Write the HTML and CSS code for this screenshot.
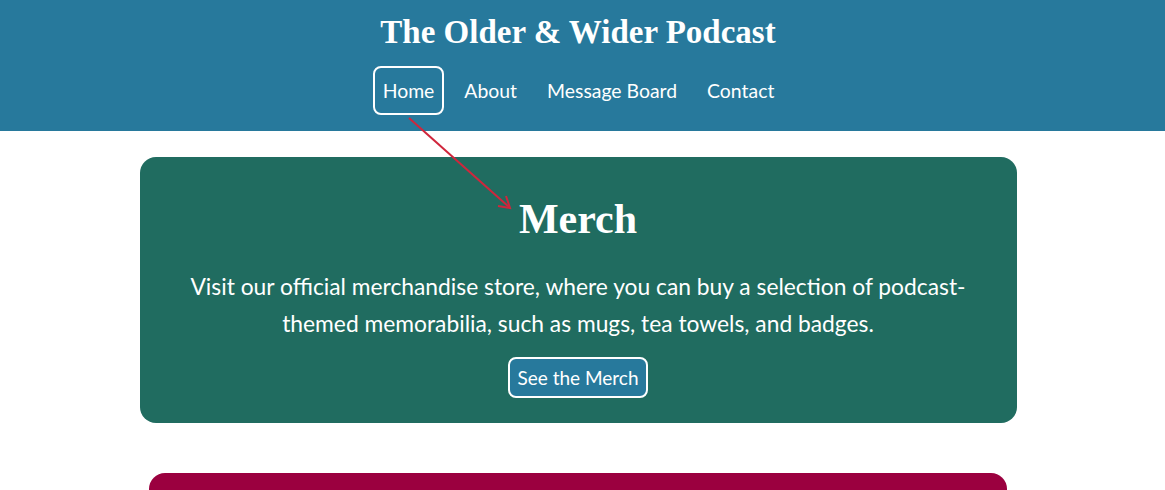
FILE: index.html
```html
<!DOCTYPE html>
<html lang="en">
<head>
<meta charset="utf-8">
<title>The Older &amp; Wider Podcast</title>
<link rel="stylesheet" href="styles.css">
</head>
<body>
<header class="site-header">
  <h1 class="site-title">The Older &amp; Wider Podcast</h1>
  <nav class="nav">
    <a class="nav-link active" href="#">Home</a>
    <a class="nav-link" href="#">About</a>
    <a class="nav-link" href="#">Message Board</a>
    <a class="nav-link" href="#">Contact</a>
  </nav>
</header>
<main class="content">
  <section class="card card-merch">
    <h2 class="card-title">Merch</h2>
    <p class="card-text">Visit our official merchandise store, where you can buy a selection of podcast-themed memorabilia, such as mugs, tea towels, and badges.</p>
    <a class="btn" href="#">See the Merch</a>
  </section>
  <section class="card card-next"></section>
</main>
<svg class="annot" width="1165" height="490" viewBox="0 0 1165 490">
  <line x1="409" y1="118" x2="509" y2="207" stroke="#d0263c" stroke-width="2" />
  <polyline points="498,206 510,208 506,196" fill="none" stroke="#d0263c" stroke-width="2" />
</svg>
</body>
</html>
```
FILE: styles.css
```css
html, body {
  margin: 0;
  padding: 0;
  background: #ffffff;
}
body {
  font-family: "Lato", "Open Sans", sans-serif;
  color: #ffffff;
  position: relative;
  overflow: hidden;
  height: 490px;
}
.site-header {
  background: #27799c;
  height: 131px;
  display: flex;
  flex-direction: column;
  align-items: center;
  box-sizing: border-box;
  padding-top: 10px;
  padding-right: 9px;
}
.site-title {
  margin: 0;
  font-family: "Liberation Serif", "DejaVu Serif", serif;
  font-weight: bold;
  font-size: 33px;
  line-height: 44px;
}
.nav {
  display: flex;
  gap: 10px;
  margin-top: 12px;
  margin-left: 1px;
}
.nav-link {
  color: #ffffff;
  text-decoration: none;
  font-size: 19.4px;
  line-height: 45px;
  padding: 0 8px;
  border: 2px solid transparent;
  border-radius: 8px;
}
.nav-link.active {
  border-color: #ffffff;
}
.content {
  display: flex;
  flex-direction: column;
  align-items: center;
  padding-top: 26px;
  padding-right: 9px;
  gap: 50px;
}
.card {
  border-radius: 16px;
  box-sizing: border-box;
}
.card-merch {
  width: 877px;
  height: 266px;
  background: #206c60;
  display: flex;
  flex-direction: column;
  align-items: center;
  padding-top: 38px;
}
.card-title {
  margin: 0;
  font-family: "Liberation Serif", "DejaVu Serif", serif;
  font-weight: bold;
  font-size: 42px;
  line-height: 48px;
}
.card-text {
  margin: 25px 0 0;
  width: 800px;
  text-align: center;
  font-size: 22.8px;
  line-height: 37px;
}
.btn {
  margin-top: 15px;
  background: #27799c;
  color: #ffffff;
  text-decoration: none;
  font-size: 19px;
  line-height: 37px;
  padding: 0 7px;
  border: 2px solid #ffffff;
  border-radius: 8px;
}
.card-next {
  width: 858px;
  height: 80px;
  background: #9b003f;
}
.annot {
  position: absolute;
  left: 0;
  top: 0;
  pointer-events: none;
}
```
